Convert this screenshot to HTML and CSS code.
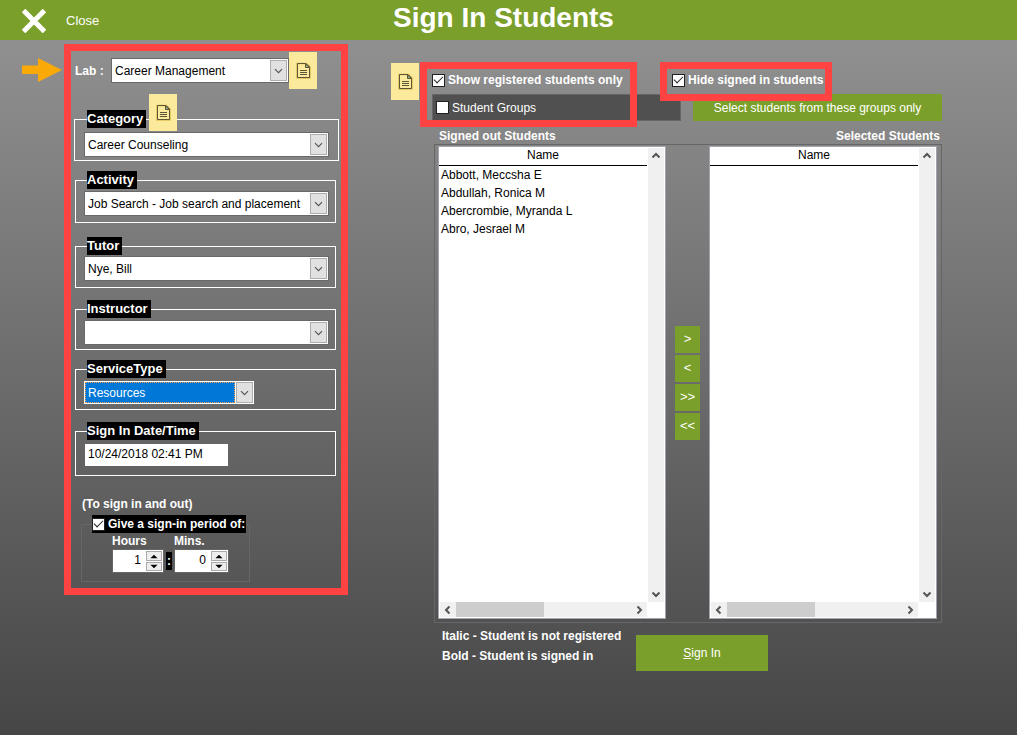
FILE: index.html
```
<!DOCTYPE html>
<html lang="en">
<head>
<meta charset="utf-8">
<title>Sign In Students</title>
<link rel="stylesheet" href="styles.css">
</head>
<body>
<svg class="symbols" aria-hidden="true">
  <symbol id="down" viewBox="0 0 17 20"><path d="M4.500 8.500l4 4 4-4" fill="none" stroke="#555" stroke-width="1.300"/></symbol>
  <symbol id="note" viewBox="0 0 28 37">
    <path d="M8 11.500H17.500L21 15V26H8z" fill="none" stroke="#e3bd55" stroke-width="1.500"/>
    <path d="M8.500 11.500H17L20.500 15V25.500H8.500z" fill="none" stroke="#5c5638"/>
    <path d="M16.500 11.500V15.500H20.500z" fill="#8fa58c" stroke="#5c5638"/>
    <path d="M11 18.500h7M11 20.500h7M11 22.500h7" stroke="#5c5638"/>
  </symbol>
  <symbol id="chev" viewBox="0 0 16 16"><path d="M4.500 9.500L8 6l3.500 3.500" fill="none" stroke="#555" stroke-width="2"/></symbol>
  <symbol id="tri" viewBox="0 0 14 9"><path d="M3 7h8L7 3z" fill="#000"/></symbol>
</svg>

<header class="topbar">
  <button class="close" type="button">
    <svg width="24" height="24" viewBox="0 0 24 24" aria-hidden="true"><path d="M1.500 1.500l21 21M22.500 1.500l-21 21" stroke="#fff" stroke-width="5"/></svg>
    <span>Close</span>
  </button>
  <h1>Sign In Students</h1>
</header>

<main class="content">
  <svg class="pointer" width="40" height="25" viewBox="0 0 40 25" aria-hidden="true"><path d="M0 8.500h16V1l24 12-24 12v-8H0z" fill="#f9a908"/></svg>

  <form class="panel">
    <div class="lab-row">
      <label for="lab">Lab :</label>
      <div class="combo lab-combo">
        <select id="lab"><option>Career Management</option></select>
        <svg class="drop"><use href="#down"/></svg>
      </div>
      <button class="note" type="button" aria-label="Lab note"><svg><use href="#note"/></svg></button>
    </div>

    <fieldset class="field category">
      <legend><label for="category">Category</label></legend>
      <div class="combo">
        <select id="category"><option>Career Counseling</option></select>
        <svg class="drop"><use href="#down"/></svg>
      </div>
      <button class="note category-note" type="button" aria-label="Category note"><svg><use href="#note"/></svg></button>
    </fieldset>

    <fieldset class="field activity">
      <legend><label for="activity">Activity</label></legend>
      <div class="combo">
        <select id="activity"><option>Job Search - Job search and placement</option></select>
        <svg class="drop"><use href="#down"/></svg>
      </div>
    </fieldset>

    <fieldset class="field tutor">
      <legend><label for="tutor">Tutor</label></legend>
      <div class="combo">
        <select id="tutor"><option>Nye, Bill</option></select>
        <svg class="drop"><use href="#down"/></svg>
      </div>
    </fieldset>

    <fieldset class="field instructor">
      <legend><label for="instructor">Instructor</label></legend>
      <div class="combo">
        <select id="instructor"><option></option></select>
        <svg class="drop"><use href="#down"/></svg>
      </div>
    </fieldset>

    <fieldset class="field service">
      <legend><label for="service">ServiceType</label></legend>
      <div class="combo active">
        <select id="service"><option>Resources</option></select>
        <svg class="drop"><use href="#down"/></svg>
      </div>
    </fieldset>

    <fieldset class="field date">
      <legend><label for="date">Sign In Date/Time</label></legend>
      <input id="date" class="date-input" type="text" value="10/24/2018 02:41 PM">
    </fieldset>

    <p class="hint">(To sign in and out)</p>
    <fieldset class="period">
      <legend><label class="check"><input type="checkbox" checked>Give a sign-in period of:</label></legend>
      <div class="times">
        <div class="time hours">
          <label for="hours">Hours</label>
          <div class="spinner">
            <input id="hours" type="text" value="1">
            <span class="steps">
              <button type="button" aria-label="More hours"><svg><use href="#tri"/></svg></button>
              <button type="button" aria-label="Fewer hours"><svg class="flip"><use href="#tri"/></svg></button>
            </span>
          </div>
        </div>
        <span class="colon">:</span>
        <div class="time mins">
          <label for="mins">Mins.</label>
          <div class="spinner">
            <input id="mins" type="text" value="0">
            <span class="steps">
              <button type="button" aria-label="More minutes"><svg><use href="#tri"/></svg></button>
              <button type="button" aria-label="Fewer minutes"><svg class="flip"><use href="#tri"/></svg></button>
            </span>
          </div>
        </div>
      </div>
    </fieldset>
  </form>

  <section class="students">
    <button class="note" type="button" aria-label="Filter note"><svg><use href="#note"/></svg></button>
    <div class="work">
      <div class="filters">
        <div class="filter-checks">
          <label class="check"><input type="checkbox" checked>Show registered students only</label>
          <label class="check"><input type="checkbox" checked>Hide signed in students</label>
        </div>
        <div class="filter-groups">
          <label class="check groups"><input type="checkbox">Student Groups</label>
          <button class="action" type="button">Select students from these <u>g</u>roups only</button>
        </div>
        <div class="frame frame-show" aria-hidden="true"></div>
        <div class="frame frame-hide" aria-hidden="true"></div>
      </div>

      <div class="captions"><h2>Signed out Students</h2><h2>Selected Students</h2></div>
      <div class="lists">
        <div class="list">
          <table>
            <thead><tr><th>Name</th></tr></thead>
            <tbody>
              <tr><td>Abbott, Meccsha E</td></tr>
              <tr><td>Abdullah, Ronica M</td></tr>
              <tr><td>Abercrombie, Myranda L</td></tr>
              <tr><td>Abro, Jesrael M</td></tr>
            </tbody>
          </table>
          <div class="vbar"><svg><use href="#chev"/></svg><svg class="flip"><use href="#chev"/></svg></div>
          <div class="hbar"><svg class="left"><use href="#chev"/></svg><span class="thumb"></span><svg class="right"><use href="#chev"/></svg></div>
        </div>
        <div class="movers">
          <button class="action" type="button">&gt;</button>
          <button class="action" type="button">&lt;</button>
          <button class="action" type="button">&gt;&gt;</button>
          <button class="action" type="button">&lt;&lt;</button>
        </div>
        <div class="list">
          <table>
            <thead><tr><th>Name</th></tr></thead>
            <tbody></tbody>
          </table>
          <div class="vbar"><svg><use href="#chev"/></svg><svg class="flip"><use href="#chev"/></svg></div>
          <div class="hbar"><svg class="left"><use href="#chev"/></svg><span class="thumb"></span><svg class="right"><use href="#chev"/></svg></div>
        </div>
      </div>

      <div class="bottom">
        <div class="key"><p>Italic - Student is not registered</p><p>Bold - Student is signed in</p></div>
        <button class="action submit" type="button"><u>S</u>ign In</button>
      </div>
    </div>
  </section>
</main>
</body>
</html>
```

FILE: styles.css
```
*, *::before { box-sizing: border-box; }

body {
  margin: 0;
  min-height: 100vh;
  display: flex;
  flex-direction: column;
  font: 12px/18px "Liberation Sans", Arial, sans-serif;
  color: #fff;
  background: linear-gradient(#949494, #464646);
}

p, h1, h2 { margin: 0; }
button, input, select { font: inherit; color: inherit; border: 0; padding: 0; margin: 0; border-radius: 0; }
svg { display: block; }
.symbols { position: absolute; width: 0; height: 0; }

/* Header */
.topbar {
  display: grid;
  grid-template-columns: 1fr auto 1fr;
  align-items: center;
  height: 40px;
  padding: 1px 32px 0 22px;
  background: #7b9f2b;
}
.close {
  display: flex;
  align-items: center;
  gap: 20px;
  justify-self: start;
  background: none;
  font-size: 13px;
}
.topbar h1 { font-size: 28px; line-height: 32px; padding-bottom: 6px; }

.content { flex: 1; display: flex; align-items: stretch; padding: 0 75px 0 22px; }
.pointer { flex: none; margin: 17px 2px 0 0; }

/* Sign-in details */
.panel {
  flex: none;
  align-self: flex-start;
  width: 284px;
  margin: 4px 43px 0 0;
  padding: 1px 2px 6px 3px;
  border: 7px solid #ff4343;
}
.lab-row { display: flex; align-items: center; padding-left: 1px; margin-bottom: 21px; }
.lab-row label { width: 36px; font-weight: bold; }
.lab-combo { width: 178px; }

.combo { display: flex; height: 25px; padding: 1px; background: #fff; border: 1px solid #696969; color: #000; }
.combo select { flex: 1; min-width: 0; appearance: none; padding-left: 2px; background: none; outline: 0; }
.drop { flex: none; width: 17px; height: 21px; background: #e1e1e1; border: 1px solid #adadad; }

.note { flex: none; width: 28px; height: 37px; background: #fbea9c; }
.note svg { width: 28px; height: 37px; }

.field {
  position: relative;
  min-width: 0;
  margin: 0 3px 12px 1px;
  padding: 2px 6px 6px 8px;
  border: 1px solid #fff;
}
.field legend { margin-left: 3px; padding: 0 3px 0 0; background: #000; font-size: 13px; font-weight: bold; }
.category { margin: 0 0 10px; padding: 4px 9px 3px; }
.category-note { position: absolute; left: 74px; top: -34px; }
.activity { margin-bottom: 14px; }
.tutor { padding-top: 1px; }
.instructor { margin-bottom: 10px; padding-bottom: 4px; }
.service { padding-top: 3px; padding-bottom: 5px; }
.service .combo.active { width: 170px; height: 23px; border-color: #fff; padding: 0; }
.active select { background: #0078d7; color: #fff; border: 1px dotted #ffa04d; margin-right: 1px; padding-left: 2px; }
.date { padding-top: 4px; padding-bottom: 9px; margin-bottom: 19px; }
.date-input { display: block; width: 143px; height: 22px; margin-left: 1px; padding: 0 3px 2px; background: #fff; color: #000; }

.hint { margin-left: 8px; font-weight: bold; }
.period { width: 169px; min-width: 0; margin: 2px 0 0 7px; padding: 0 10px 8px 30px; border: 1px solid #666; }
.period legend { margin-left: -20px; padding: 0 1px 0 0; background: #000; }

.check { display: flex; align-items: center; gap: 3px; font-weight: bold; white-space: nowrap; }
.check input {
  appearance: none;
  flex: none;
  width: 13px;
  height: 13px;
  background: #fff;
  border: 1px solid #222;
  display: grid;
  place-items: center;
}
.check input:checked::before {
  content: "";
  width: 9px;
  height: 5px;
  border: solid #222;
  border-width: 0 0 1px 1px;
  transform: translateY(-2px) rotate(-45deg);
}

.times { display: flex; align-items: flex-end; gap: 2px; }
.time { font-weight: bold; }
.time label { display: block; line-height: 16px; }
.hours { width: 52px; }
.mins { width: 55px; }
.spinner { display: flex; height: 24px; padding: 1px; background: #fff; border: 1px solid #666; }
.spinner input { flex: 1; min-width: 0; width: 0; text-align: right; padding: 0 5px 2px 0; color: #000; background: none; font-weight: normal; }
.steps { display: grid; width: 16px; gap: 1px; }
.steps button { min-height: 0; background: #eee; border: 1px solid #aaa; }
.steps svg { width: 14px; height: 8px; }
.colon { width: 6px; height: 18px; margin-bottom: 3px; background: #000; font-weight: bold; text-align: center; }
.flip { transform: rotate(180deg); }

/* Students */
.students { flex: 1; display: flex; gap: 13px; min-width: 0; padding: 23px 0 64px; }
.work { flex: 1; min-width: 0; display: flex; flex-direction: column; padding-top: 8px; }
.filters { position: relative; }
.filter-checks { display: grid; grid-template-columns: 1fr 270px; margin-bottom: 5px; }
.filter-groups { display: grid; grid-template-columns: 1fr 1fr; gap: 12px; }
.groups { height: 27px; padding-left: 3px; font-weight: normal; background: #505050; border: 1px solid #666; }
.action { background: #7b9f2b; color: #fff; white-space: nowrap; }
.frame { position: absolute; border: 7px solid #ff4343; pointer-events: none; }
.frame-show { left: -12px; top: -9px; width: 217px; height: 65px; }
.frame-hide { right: 110px; top: -9px; width: 172px; height: 39px; }

.captions { display: flex; justify-content: space-between; padding: 8px 2px 0 7px; }
.captions h2 { font-size: 12px; line-height: 15px; }
.lists { flex: 1; display: flex; margin-left: 2px; padding: 1px 4px 3px 3px; border: 1px solid #666; }
.list {
  flex: 1;
  min-width: 0;
  display: grid;
  grid-template: 1fr 16px / 1fr 18px;
  background: #fff;
  border: 1px solid #a0a4ac;
  color: #000;
}
.list table { align-self: start; border-collapse: collapse; }
.list th { height: 18px; padding: 0 0 1px; line-height: 16px; font-weight: normal; border-bottom: 1px solid #000; }
.list td { height: 18px; padding: 0 2px; }
.vbar { display: flex; flex-direction: column; justify-content: space-between; margin: 1px 1px 0; background: #f0f0f0; }
.vbar svg, .hbar svg { flex: none; width: 16px; height: 16px; }
.hbar { display: flex; margin: 0 0 1px 1px; background: #f0f0f0; }
.thumb { width: 88px; background: #cdcdcd; }
.left { transform: rotate(-90deg); }
.right { transform: rotate(90deg); margin-left: auto; }

.movers { flex: none; display: flex; flex-direction: column; justify-content: center; gap: 2px; width: 43px; padding: 0 9px; }
.movers button { height: 27px; font-size: 13px; }

.bottom { display: flex; padding: 3px 0 0 10px; }
.key { width: 194px; font-weight: bold; line-height: 20px; white-space: nowrap; }
.submit { width: 132px; height: 36px; margin-top: 9px; }
```
